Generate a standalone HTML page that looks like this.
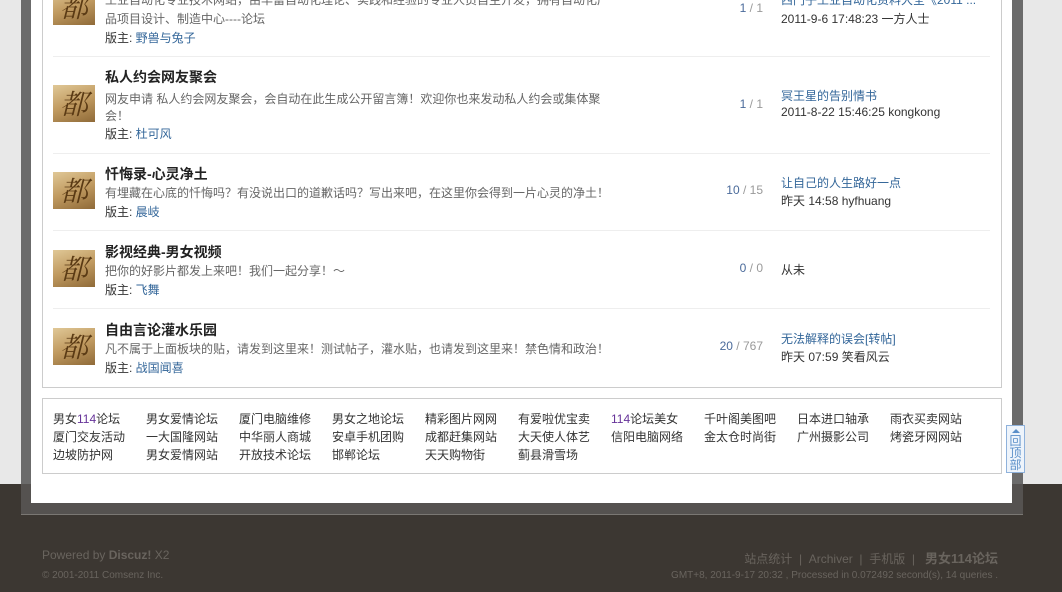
<!DOCTYPE html>
<html><head><meta charset="utf-8"><style>
*{margin:0;padding:0;box-sizing:border-box}
body{width:1062px;height:592px;overflow:hidden;background:#3c3732;font:12px "Liberation Sans","Noto Sans CJK SC",sans-serif;color:#333;position:relative}
.top{position:absolute;left:0;top:0;width:1062px;height:484px;background:#e8e8e8}
.frame{position:absolute;left:21px;top:0;width:1002px;height:484px;background:#6b6b6b}
.frame2{position:absolute;left:21px;top:484px;width:1002px;height:31px;background:#555250;border-bottom:1px solid #7a7773}
.white{position:absolute;left:31px;top:0;width:981px;height:503px;background:#fff}
.box{position:absolute;left:42px;top:-2px;width:960px;height:390px;border:1px solid #ccc;border-top:none}
.ab{position:absolute;white-space:nowrap}
.sep{position:absolute;left:53px;width:937px;height:1px;background:#eee}
.ic{position:absolute;left:53px;width:42px;height:37px;background:linear-gradient(160deg,#e0c897 0%,#c09a60 50%,#8f6a38 100%);color:#5a3a14;font:28px "Noto Serif CJK SC",serif;line-height:37px;text-align:center;overflow:hidden;font-style:italic}
.t{font-size:14px;font-weight:bold;color:#222}
.d{color:#666;line-height:18px}
a{color:#336699;text-decoration:none}
.n{color:#4a6a9a;text-align:right;width:80px}
.n span{color:#999}
.lk{position:absolute;left:42px;top:398px;width:960px;height:76px;border:1px solid #ccc}
.lk div{position:absolute;white-space:nowrap;color:#333}
.ft{color:#69645e}
</style></head><body>
<div class="top"></div>
<div class="frame"></div>
<div class="frame2"></div>
<div class="white"></div>
<div class="box"></div>

<div class="ic" style="top:-12px">都</div>
<div class="ab d" style="left:105px;top:-9px">工业自动化专业技术网站，由丰富自动化理论、实践和经验的专业人员自主开发，拥有自动化产</div>
<div class="ab d" style="left:105px;top:10px">品项目设计、制造中心----论坛</div>
<div class="ab" style="left:105px;top:29px">版主: <a>野兽与兔子</a></div>
<div class="ab n" style="left:683px;top:1px">1 <span>/ 1</span></div>
<div class="ab" style="left:781px;top:-9px"><a>西门子工业自动化资料大全《2011 ...</a></div>
<div class="ab" style="left:781px;top:10px">2011-9-6 17:48:23 一方人士</div>
<div class="sep" style="top:56px"></div>

<div class="ab t" style="left:105px;top:67px">私人约会网友聚会</div>
<div class="ic" style="top:85px">都</div>
<div class="ab d" style="left:105px;top:90px">网友申请 私人约会网友聚会，会自动在此生成公开留言簿！欢迎你也来发动私人约会或集体聚</div>
<div class="ab d" style="left:105px;top:107px">会！</div>
<div class="ab" style="left:105px;top:125px">版主: <a>杜可风</a></div>
<div class="ab n" style="left:683px;top:97px">1 <span>/ 1</span></div>
<div class="ab" style="left:781px;top:87px"><a>冥王星的告别情书</a></div>
<div class="ab" style="left:781px;top:105px">2011-8-22 15:46:25 kongkong</div>
<div class="sep" style="top:153px"></div>

<div class="ab t" style="left:105px;top:164px">忏悔录-心灵净土</div>
<div class="ic" style="top:172px">都</div>
<div class="ab d" style="left:105px;top:184px">有埋藏在心底的忏悔吗？有没说出口的道歉话吗？写出来吧，在这里你会得到一片心灵的净土！</div>
<div class="ab" style="left:105px;top:203px">版主: <a>晨岐</a></div>
<div class="ab n" style="left:683px;top:183px">10 <span>/ 15</span></div>
<div class="ab" style="left:781px;top:174px"><a>让自己的人生路好一点</a></div>
<div class="ab" style="left:781px;top:192px">昨天 14:58 hyfhuang</div>
<div class="sep" style="top:230px"></div>

<div class="ab t" style="left:105px;top:242px">影视经典-男女视频</div>
<div class="ic" style="top:250px">都</div>
<div class="ab d" style="left:105px;top:262px">把你的好影片都发上来吧！我们一起分享！～</div>
<div class="ab" style="left:105px;top:281px">版主: <a>飞舞</a></div>
<div class="ab n" style="left:683px;top:261px">0 <span>/ 0</span></div>
<div class="ab" style="left:781px;top:261px">从未</div>
<div class="sep" style="top:308px"></div>

<div class="ab t" style="left:105px;top:320px">自由言论灌水乐园</div>
<div class="ic" style="top:328px">都</div>
<div class="ab d" style="left:105px;top:340px">凡不属于上面板块的贴，请发到这里来！测试帖子，灌水贴，也请发到这里来！禁色情和政治！</div>
<div class="ab" style="left:105px;top:359px">版主: <a>战国闻喜</a></div>
<div class="ab n" style="left:683px;top:339px">20 <span>/ 767</span></div>
<div class="ab" style="left:781px;top:330px"><a>无法解释的误会[转帖]</a></div>
<div class="ab" style="left:781px;top:348px">昨天 07:59 笑看风云</div>

<div class="lk">
<div style="left:10px;top:11px">男女<span style="color:#639">114</span>论坛</div><div style="left:103px;top:11px">男女爱情论坛</div><div style="left:196px;top:11px">厦门电脑维修</div><div style="left:289px;top:11px">男女之地论坛</div><div style="left:382px;top:11px">精彩图片网网</div><div style="left:475px;top:11px">有爱啦优宝卖</div><div style="left:568px;top:11px"><span style="color:#639">114</span>论坛美女</div><div style="left:661px;top:11px">千叶阁美图吧</div><div style="left:754px;top:11px">日本进口轴承</div><div style="left:847px;top:11px">雨衣买卖网站</div>
<div style="left:10px;top:29px">厦门交友活动</div><div style="left:103px;top:29px">一大国隆网站</div><div style="left:196px;top:29px">中华丽人商城</div><div style="left:289px;top:29px">安卓手机团购</div><div style="left:382px;top:29px">成都赶集网站</div><div style="left:475px;top:29px">大天使人体艺</div><div style="left:568px;top:29px">信阳电脑网络</div><div style="left:661px;top:29px">金太仓时尚街</div><div style="left:754px;top:29px">广州摄影公司</div><div style="left:847px;top:29px">烤瓷牙网网站</div>
<div style="left:10px;top:47px">边坡防护网</div><div style="left:103px;top:47px">男女爱情网站</div><div style="left:196px;top:47px">开放技术论坛</div><div style="left:289px;top:47px">邯郸论坛</div><div style="left:382px;top:47px">天天购物街</div><div style="left:475px;top:47px">蓟县滑雪场</div>
</div>

<div style="position:absolute;left:1006px;top:425px;width:19px;height:48px;background:#eef4fb;border:1px solid #8fb2dc;color:#5b8fc9;font-size:12px;line-height:12px;text-align:center;padding-top:3px">
<div style="width:0;height:0;margin:0 auto 2px;border-left:4px solid transparent;border-right:4px solid transparent;border-bottom:4px solid #5b8fc9"></div>回<br>顶<br>部</div>

<div class="ab ft" style="left:42px;top:548px;font-size:12px">Powered by <b>Discuz!</b> X2</div>
<div class="ab ft" style="left:42px;top:570px;font-size:10px">© 2001-2011 Comsenz Inc.</div>
<div class="ab ft" style="right:64px;top:548px;font-size:12px">站点统计 &nbsp;| &nbsp;Archiver &nbsp;| &nbsp;手机版 &nbsp;| &nbsp;&nbsp;<b style="font-size:13px">男女114论坛</b></div>
<div class="ab ft" style="right:64px;top:570px;font-size:10px">GMT+8, 2011-9-17 20:32 , Processed in 0.072492 second(s), 14 queries .</div>
</body></html>
